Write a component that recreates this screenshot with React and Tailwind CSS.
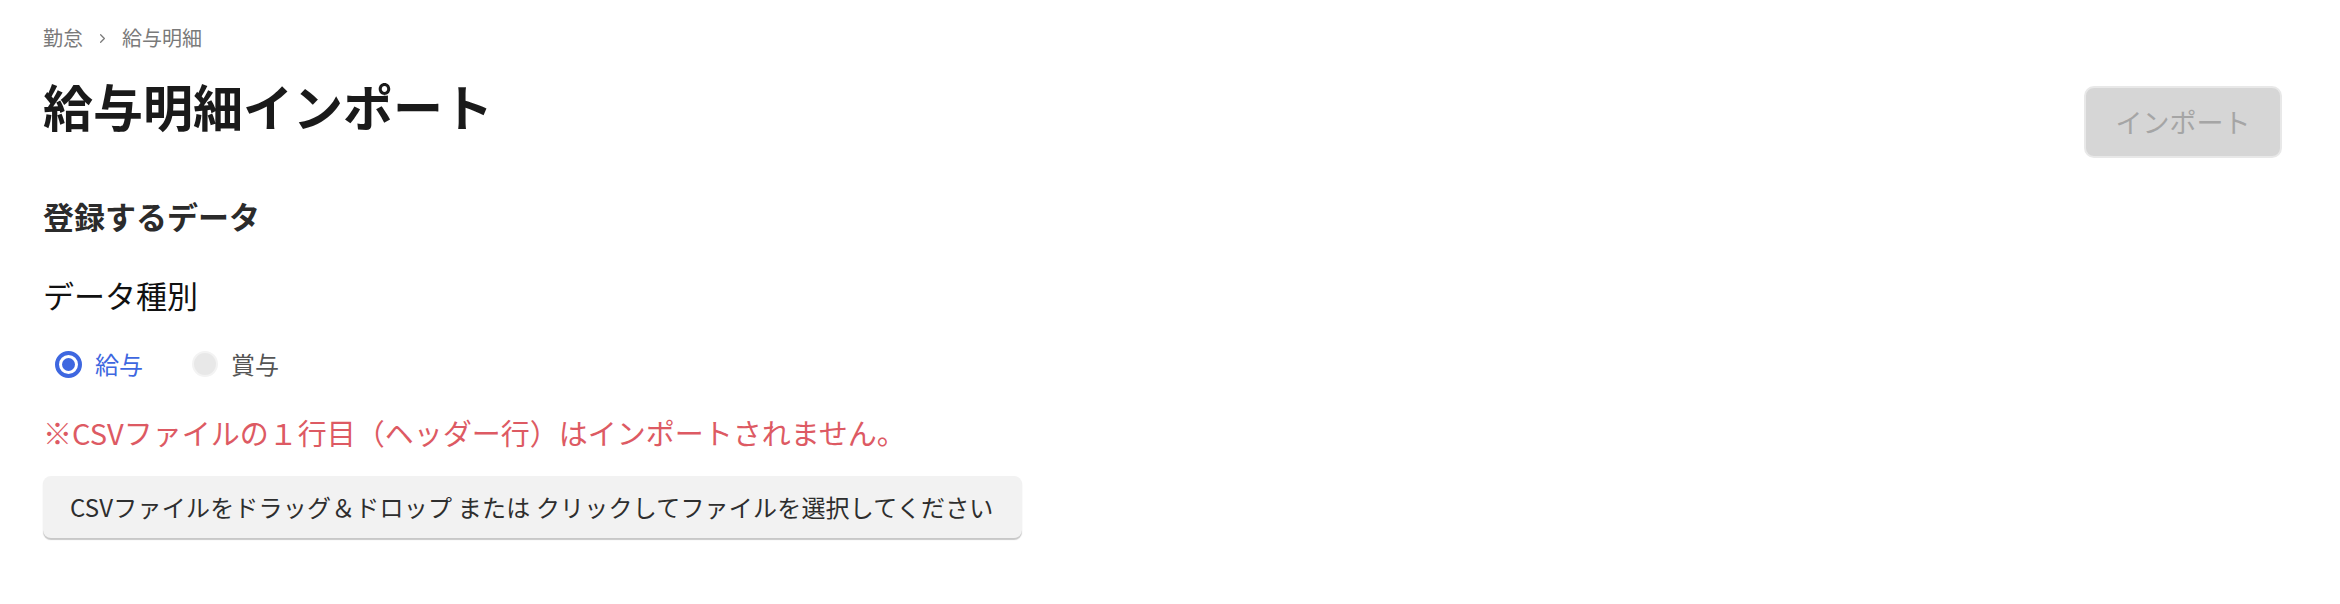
import { ChevronRight } from 'lucide-react'

function Radio({ checked, label }) {
  return (
    <label className="flex items-center gap-[13px]">
      {checked ? (
        <span className="flex h-[27px] w-[27px] items-center justify-center rounded-full border-[4px] border-[#3e67e0]">
          <span className="h-[13px] w-[13px] rounded-full bg-[#3e67e0]" />
        </span>
      ) : (
        <span className="h-[26px] w-[26px] rounded-full border-2 border-[#f3f3f3] bg-[#e8e8e8]" />
      )}
      <span className={`text-[24px] leading-[40px] ${checked ? 'text-[#3e67e0]' : 'text-[#555]'}`}>
        {label}
      </span>
    </label>
  )
}

function App() {
  return (
    <div className="min-h-[604px] bg-white px-[43px] pt-[26px] font-['Noto_Sans_CJK_JP','Noto_Sans',sans-serif]">
      {/* breadcrumb */}
      <div className="flex items-center gap-[12px] text-[20px] leading-[24px] text-[#7a7a7a]">
        <span>勤怠</span>
        <ChevronRight size={15} strokeWidth={2} />
        <span>給与明細</span>
      </div>

      <div className="mt-[25px] flex items-start justify-between pr-[15px]">
        <h1 className="text-[50px] font-bold leading-[60px] text-[#1a1a1a]">給与明細インポート</h1>
        <button
          disabled
          className="mt-[11px] h-[72px] w-[198px] rounded-[10px] border-2 border-[#e8e8e8] bg-[#d6d6d6] text-[27px] text-[#a5a5a5]"
        >
          インポート
        </button>
      </div>

      <h2 className="mt-[38px] text-[31px] font-bold leading-[40px] text-[#2b2b2b]">登録するデータ</h2>

      <div className="mt-[39px] text-[31px] leading-[40px] text-[#111]">データ種別</div>

      <div className="mt-[29px] flex items-center gap-[49px] pl-[12px]">
        <Radio checked label="給与" />
        <Radio label="賞与" />
      </div>

      <p className="mt-[28px] text-[29px] leading-[40px] text-[#dd5a63]">
        ※CSVファイルの１行目（ヘッダー行）はインポートされません。
      </p>

      <div className="mt-[24px] flex h-[62px] w-[979px] items-center rounded-[8px] bg-[#f2f2f2] px-[27px] text-[24px] tracking-[0.2px] text-[#2e2e2e] shadow-[0_2px_1px_#c8c8c8]">
        CSVファイルをドラッグ＆ドロップ または クリックしてファイルを選択してください
      </div>
    </div>
  )
}

export default App
